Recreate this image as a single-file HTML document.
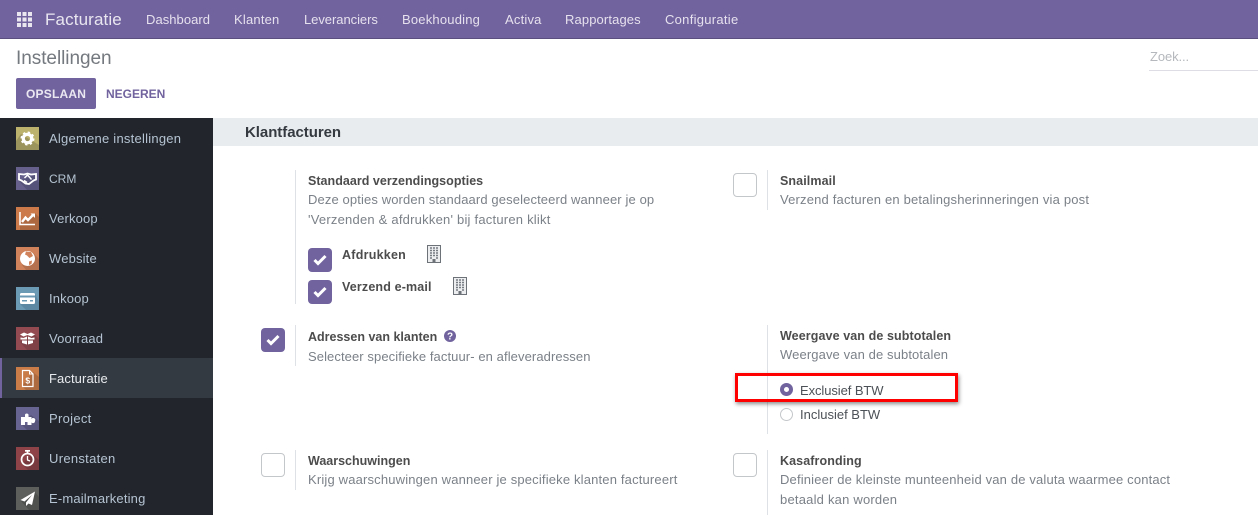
<!DOCTYPE html>
<html lang="nl"><head><meta charset="utf-8"><title>Instellingen</title>
<style>
html,body{margin:0;padding:0}
body{width:1258px;height:515px;overflow:hidden;position:relative;background:#fff;font-family:"Liberation Sans",sans-serif;font-size:13px;color:#6c757d}
.a{position:absolute}
.t{position:absolute;white-space:nowrap;line-height:20px}
.nav{color:#e6e1ee;top:10px;font-size:13px}
.side{color:#b5c3d2;left:49px;font-size:13px}
.b{font-weight:bold;color:#4c4c4c;font-size:12.5px}
.d{color:#7b8188;font-size:13px}
.v{position:absolute;width:1px;background:#dee2e6}
.cb{position:absolute;width:22px;height:22px;border:1px solid #c4c7ca;border-radius:4px;background:#fff}
.ck{position:absolute;width:24px;height:24px;border-radius:4px;background:#71639e}
.ck svg{position:absolute;left:5px;top:6px}
.ic{position:absolute;left:16px;width:23px;height:23px}
</style></head><body>
<div class="a" style="left:0;top:0;width:1258px;height:38px;background:#71639e;border-bottom:1px solid #5a4f7f"></div>
<svg class="a" style="left:17px;top:12px" width="15" height="15" viewBox="0 0 15 15" fill="#e9e6f0"><rect x="0" y="0" width="4" height="4"/><rect x="5.500" y="0" width="4" height="4"/><rect x="11" y="0" width="4" height="4"/><rect x="0" y="5.500" width="4" height="4"/><rect x="5.500" y="5.500" width="4" height="4"/><rect x="11" y="5.500" width="4" height="4"/><rect x="0" y="11" width="4" height="4"/><rect x="5.500" y="11" width="4" height="4"/><rect x="11" y="11" width="4" height="4"/></svg>
<div class="t" style="left:45px;top:10px;font-size:17px;color:#e9e6f0;letter-spacing:.13px">Facturatie</div>
<div class="t nav" style="left:146px;letter-spacing:.05px">Dashboard</div>
<div class="t nav" style="left:234px;letter-spacing:.2px">Klanten</div>
<div class="t nav" style="left:304px;letter-spacing:-.05px">Leveranciers</div>
<div class="t nav" style="left:402px;letter-spacing:.2px">Boekhouding</div>
<div class="t nav" style="left:505px;letter-spacing:.2px">Activa</div>
<div class="t nav" style="left:565px;letter-spacing:.12px">Rapportages</div>
<div class="t nav" style="left:665px;letter-spacing:.28px">Configuratie</div>

<div class="t" style="left:16px;top:49px;font-size:19px;color:#74797f;letter-spacing:-.05px">Instellingen</div>
<div class="a" style="left:16px;top:78px;width:80px;height:31px;background:#71639e;border-radius:2px"></div>
<div class="t" style="left:26px;top:84px;font-size:12px;font-weight:bold;color:#ebe8f2;letter-spacing:.2px">OPSLAAN</div>
<div class="t" style="left:106px;top:84px;font-size:12px;font-weight:bold;color:#71639e;letter-spacing:0">NEGEREN</div>
<div class="t" style="left:1150px;top:47px;font-size:13px;color:#b5b8bc;letter-spacing:-.1px">Zoek...</div>
<div class="a" style="left:1149px;top:70px;width:109px;height:1px;background:#dedde6"></div>

<div class="a" style="left:0;top:118px;width:213px;height:397px;background:#22262c"></div>
<div class="a" style="left:0;top:358px;width:213px;height:40px;background:#343a41"></div>
<div class="a" style="left:0;top:358px;width:2px;height:40px;background:#71639e"></div>

<svg class="ic" style="top:127px" viewBox="0 0 23 23"><rect width="23" height="23" fill="#bcb16d"/><path d="M0 23V14L5 7 23 18V23Z" fill="#9c945d"/><circle cx="11.500" cy="11.500" r="4.200" fill="none" stroke="#fff" stroke-width="3.200"/><circle cx="11.500" cy="11.500" r="6.200" fill="none" stroke="#fff" stroke-width="1.600" stroke-dasharray="2.400 2.470"/></svg>
<svg class="ic" style="top:167px" viewBox="0 0 23 23"><rect width="23" height="23" fill="#65618c"/><path d="M3 14 11 23H23V16L19 8Z" fill="#56537a"/><path d="M3 7 8 7.500 11.500 6.500 15 7.500 20 7V12.500L17.500 13.500 13 17 9.500 16.500 5.500 13.500 3 12.500Z" fill="none" stroke="#fff" stroke-width="1.800"/><path d="M8.500 11 11.500 8 15.500 12.500M8 13.500 11 15.500" fill="none" stroke="#fff" stroke-width="1.500"/></svg>
<svg class="ic" style="top:207px" viewBox="0 0 23 23"><rect width="23" height="23" fill="#cc7a4a"/><path d="M4 18V23H23V10L19 6 5 15Z" fill="#ad683f"/><path d="M4 5V17.500H19" fill="none" stroke="#fff" stroke-width="1.500"/><path d="M6 15 9.500 10.500 12 13 17 8" fill="none" stroke="#fff" stroke-width="2.400"/><path d="M14.500 6.500H19V11Z" fill="#fff"/></svg>
<svg class="ic" style="top:247px" viewBox="0 0 23 23"><rect width="23" height="23" fill="#d0835a"/><path d="M6 18 10 23H23V12L17 6Z" fill="#b5714e"/><circle cx="11.500" cy="11.500" r="7.500" fill="#fff"/><path d="M10 4.500 15 5 17 9 13.500 11 11 8.500 9 7.500ZM13 14.500 16 13.500 15.500 17 13 18Z" fill="#d0835a"/></svg>
<svg class="ic" style="top:287px" viewBox="0 0 23 23"><rect width="23" height="23" fill="#6b9ab5"/><path d="M3 16 10 23H23V15L19 7Z" fill="#5c88a3"/><rect x="4" y="6" width="15" height="11" rx="1.500" fill="#fff"/><rect x="4" y="8.500" width="15" height="2" fill="#6b9ab5"/><rect x="6" y="13" width="5" height="1.500" fill="#6b9ab5"/><rect x="14" y="13" width="3" height="1.500" fill="#6b9ab5"/></svg>
<svg class="ic" style="top:327px" viewBox="0 0 23 23"><rect width="23" height="23" fill="#934a50"/><path d="M4 15 11 23H23V12L19 8Z" fill="#7f4146"/><path d="M4 7.500 8 5.500 11.500 7 15 5.500 19 7.500 15.500 9.500 11.500 8 7.500 9.500Z" fill="#fff"/><path d="M4.500 10.500 7.500 11 11 9.500V12.500H4.500ZM12 9.500 15.500 11 18.500 10.500V12.500H12ZM6 13.500H11V17.500L6 16ZM12 13.500H17V16L12 17.500Z" fill="#fff"/></svg>
<svg class="ic" style="top:367px" viewBox="0 0 23 23"><rect width="23" height="23" fill="#c97b48"/><path d="M6 19 10 23H23V10L17 5Z" fill="#ad6a3f"/><path d="M6.500 3.500H13.500L17 7V19.500H6.500Z" fill="none" stroke="#fff" stroke-width="1.200"/><path d="M13.500 3.500V7H17" fill="none" stroke="#fff" stroke-width="1"/><text x="11.700" y="16.500" font-size="8.500" font-weight="bold" fill="#fff" text-anchor="middle" font-family="Liberation Sans">$</text></svg>
<svg class="ic" style="top:407px" viewBox="0 0 23 23"><rect width="23" height="23" fill="#676491"/><path d="M5 17 11 23H23V14L15 8Z" fill="#57547b"/><path d="M5 10H9V7.500A2 2 0 0 1 12.500 7.500V10H15.500V12A2 2 0 0 1 19 14A2 2 0 0 1 15.500 15.500V18H5Z" fill="#fff"/><rect x="9" y="15" width="2.500" height="3" fill="#676491"/></svg>
<svg class="ic" style="top:447px" viewBox="0 0 23 23"><rect width="23" height="23" fill="#8d4347"/><path d="M6 17 12 23H23V13L16 7Z" fill="#783a3e"/><circle cx="11.500" cy="12.500" r="6" fill="none" stroke="#fff" stroke-width="1.700"/><rect x="9" y="3" width="5" height="1.700" fill="#fff"/><rect x="10.700" y="4" width="1.600" height="3" fill="#fff"/><path d="M11.500 9V13L14 14" fill="none" stroke="#fff" stroke-width="1.300"/></svg>
<svg class="ic" style="top:487px" viewBox="0 0 23 23"><rect width="23" height="23" fill="#5d5f5c"/><path d="M5 14 13 23H23V10L19 5Z" fill="#4f514f"/><path d="M19 4.500 4.500 13 8.500 14.500 16 8 10 15.500V19L12.500 16.500 16 18Z" fill="#fff"/></svg>

<div class="t side" style="top:129px;letter-spacing:.24px">Algemene instellingen</div>
<div class="t side" style="top:169px;font-size:12px">CRM</div>
<div class="t side" style="top:209px;letter-spacing:.16px">Verkoop</div>
<div class="t side" style="top:249px;letter-spacing:.16px">Website</div>
<div class="t side" style="top:289px;letter-spacing:.13px">Inkoop</div>
<div class="t side" style="top:329px;letter-spacing:.18px">Voorraad</div>
<div class="t side" style="top:369px;color:#e8ecf0;letter-spacing:.1px">Facturatie</div>
<div class="t side" style="top:409px;letter-spacing:.3px">Project</div>
<div class="t side" style="top:449px;letter-spacing:.3px">Urenstaten</div>
<div class="t side" style="top:489px;letter-spacing:.17px">E-mailmarketing</div>

<div class="a" style="left:213px;top:118px;width:1045px;height:28px;background:#e9ecef"></div>
<div class="t" style="left:245px;top:123px;font-size:15px;font-weight:bold;color:#343a40;letter-spacing:-.05px">Klantfacturen</div>

<div class="v" style="left:295px;top:170px;height:134px"></div>
<div class="t b" style="left:308px;top:171px;letter-spacing:.03px">Standaard verzendingsopties</div>
<div class="t d" style="left:308px;top:190px;letter-spacing:.12px">Deze opties worden standaard geselecteerd wanneer je op</div>
<div class="t d" style="left:308px;top:210px;letter-spacing:.22px">'Verzenden &amp; afdrukken' bij facturen klikt</div>
<div class="ck" style="left:308px;top:248px"><svg width="14" height="12" viewBox="0 0 14 12"><path d="M1.500 6 5 9.500 12.500 2" fill="none" stroke="#fff" stroke-width="3"/></svg></div>
<div class="t b" style="left:342px;top:245px;letter-spacing:.25px">Afdrukken</div>
<svg class="a" style="left:427px;top:245px" width="14" height="18" viewBox="0 0 14 18"><path d="M.5.500H13.500V17.500H.5Z" fill="#eceef0" stroke="#6d7278"/><path d="M3 3H5M6 3H8M9 3H11M3 5.500H5M6 5.500H8M9 5.500H11M3 8H5M6 8H8M9 8H11M3 10.500H5M6 10.500H8M9 10.500H11M3 13H5M9 13H11" stroke="#777c82" stroke-width="1.500"/><rect x="5.500" y="14" width="3" height="3.500" fill="#6d7278"/></svg>
<div class="ck" style="left:308px;top:280px"><svg width="14" height="12" viewBox="0 0 14 12"><path d="M1.500 6 5 9.500 12.500 2" fill="none" stroke="#fff" stroke-width="3"/></svg></div>
<div class="t b" style="left:342px;top:277px;letter-spacing:.15px">Verzend e-mail</div>
<svg class="a" style="left:453px;top:277px" width="14" height="18" viewBox="0 0 14 18"><path d="M.5.500H13.500V17.500H.5Z" fill="#eceef0" stroke="#6d7278"/><path d="M3 3H5M6 3H8M9 3H11M3 5.500H5M6 5.500H8M9 5.500H11M3 8H5M6 8H8M9 8H11M3 10.500H5M6 10.500H8M9 10.500H11M3 13H5M9 13H11" stroke="#777c82" stroke-width="1.500"/><rect x="5.500" y="14" width="3" height="3.500" fill="#6d7278"/></svg>

<div class="cb" style="left:733px;top:173px"></div>
<div class="v" style="left:767px;top:170px;height:40px"></div>
<div class="t b" style="left:780px;top:171px;letter-spacing:.1px">Snailmail</div>
<div class="t d" style="left:780px;top:190px;letter-spacing:.18px">Verzend facturen en betalingsherinneringen via post</div>

<div class="ck" style="left:261px;top:328px"><svg width="14" height="12" viewBox="0 0 14 12"><path d="M1.500 6 5 9.500 12.500 2" fill="none" stroke="#fff" stroke-width="3"/></svg></div>
<div class="v" style="left:295px;top:325px;height:41px"></div>
<div class="t b" style="left:308px;top:327px;letter-spacing:0">Adressen van klanten</div>
<svg class="a" style="left:444px;top:330px" width="12" height="12" viewBox="0 0 12 12"><circle cx="6" cy="6" r="6" fill="#71639e"/><text x="6" y="9.500" text-anchor="middle" font-size="10" font-weight="bold" fill="#fff" font-family="Liberation Sans">?</text></svg>
<div class="t d" style="left:308px;top:347px;letter-spacing:.09px">Selecteer specifieke factuur- en afleveradressen</div>

<div class="v" style="left:767px;top:325px;height:109px"></div>
<div class="t b" style="left:780px;top:326px;letter-spacing:.1px">Weergave van de subtotalen</div>
<div class="t d" style="left:780px;top:345px;letter-spacing:.11px">Weergave van de subtotalen</div>
<div class="a" style="left:780px;top:383px;width:13px;height:13px;border-radius:50%;background:#fff;box-shadow:inset 0 0 0 4px #71639e"></div>
<div class="t" style="left:800px;top:381px;color:#4c5157;font-size:13px;letter-spacing:-.08px">Exclusief BTW</div>
<div class="a" style="left:780px;top:408px;width:11px;height:11px;border-radius:50%;background:#fff;border:1px solid #c4c7ca"></div>
<div class="t" style="left:800px;top:405px;color:#4c5157;font-size:13px;letter-spacing:0">Inclusief BTW</div>
<div class="a" style="left:735px;top:373px;width:217px;height:23px;border:3px solid #f00;box-shadow:1px 2px 4px rgba(0,0,0,.45)"></div>

<div class="cb" style="left:261px;top:453px"></div>
<div class="v" style="left:295px;top:450px;height:40px"></div>
<div class="t b" style="left:308px;top:451px;letter-spacing:0">Waarschuwingen</div>
<div class="t d" style="left:308px;top:470px;letter-spacing:.17px">Krijg waarschuwingen wanneer je specifieke klanten factureert</div>

<div class="cb" style="left:733px;top:453px"></div>
<div class="v" style="left:767px;top:450px;height:65px"></div>
<div class="t b" style="left:780px;top:451px;letter-spacing:.1px">Kasafronding</div>
<div class="t d" style="left:780px;top:470px;letter-spacing:.16px">Definieer de kleinste munteenheid van de valuta waarmee contact</div>
<div class="t d" style="left:780px;top:490px;letter-spacing:.21px">betaald kan worden</div>
</body></html>
